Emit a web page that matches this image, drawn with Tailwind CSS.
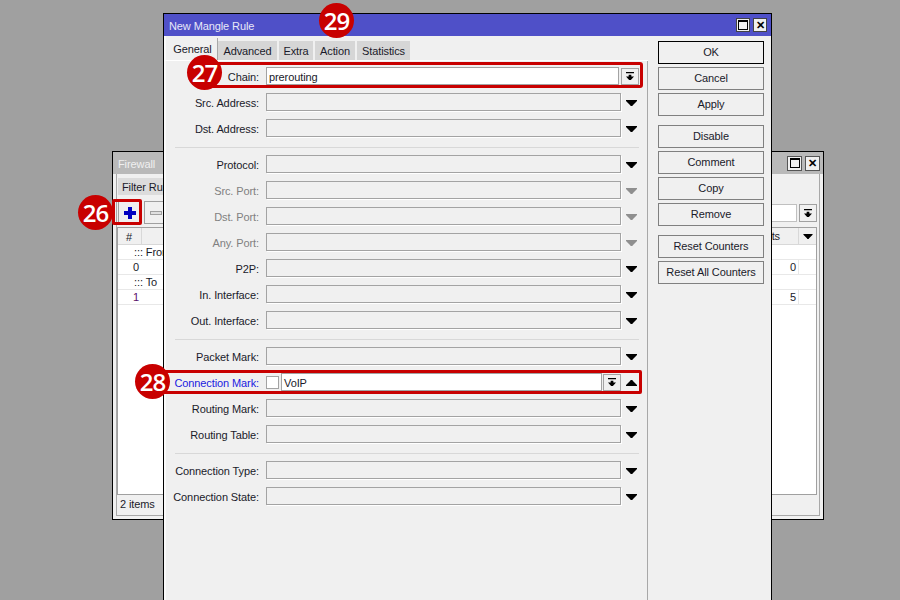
<!DOCTYPE html>
<html lang="en">
<head>
<meta charset="UTF-8">
<title>New Mangle Rule</title>
<script src="https://cdn.jsdelivr.net/npm/@tailwindcss/browser@4"></script>
</head>
<body class="bg-[#a0a0a0] overflow-hidden font-['Liberation_Sans',sans-serif] text-[11px] tracking-[-0.1px] text-[#1a1a2a]">
<svg class="hidden">
  <symbol id="down" viewBox="0 0 11 6"><path d="M0 0h11v1L6.500 5.500V6h-2v-.5L0 1z" fill="#000"/></symbol>
  <symbol id="up" viewBox="0 0 11 6"><path d="M0 6h11V5L6.500 .5V0h-2v.5L0 5z" fill="#000"/></symbol>
  <symbol id="bar" viewBox="0 0 9 9"><path d="M0 0h9v1.500H0zM3 3h3v2h3L5.500 9h-2L0 5h3z" fill="#000"/></symbol>
</svg>

<div class="relative w-[900px] h-[600px]">

  <!-- firewall window behind -->
  <div class="absolute left-[112px] top-[151px] w-[712px] h-[369px] border border-black bg-[#f0f0f0] flex flex-col">
    <div class="h-[22px] bg-[#b9b9b9] flex items-center justify-between pl-[5px] pr-[3px] text-[#f0f0f0]">
      <span class="pt-[2px]">Firewall</span>
      <div class="flex gap-[3px]">
        <div class="w-[15px] h-[15px] border border-[#555] bg-[#f0f0f0] flex items-center justify-center"><div class="w-[10px] h-[10px] border border-black border-t-2"></div></div>
        <div class="w-[15px] h-[15px] border border-[#555] bg-[#f0f0f0] flex items-center justify-center text-[11px] font-bold leading-none text-black">✕</div>
      </div>
    </div>
    <div class="flex-1 flex flex-col mx-[3px] mb-[3px] border-x border-b border-[#a8a8a8]">
      <div class="h-[17px] mt-[4px] ml-[1px] flex items-center px-[4px] pt-[2px] w-[120px] bg-[#dcdcdc]">Filter Rules</div>
      <div class="h-[23px] mt-[6px] flex items-center gap-[3px] ml-[1px] mr-[2px]">
        <div class="w-[23px] h-[23px] border border-[#a0a0a0] flex items-center justify-center">
          <svg width="12" height="12" viewBox="0 0 12 12"><path d="M4 0h4v4h4v4H8v4H4V8H0V4h4z" fill="#0000c0"/></svg>
        </div>
        <div class="w-[23px] h-[23px] border border-[#a0a0a0] flex items-center justify-center">
          <div class="w-[12px] h-[4px] border border-[#a0a0a0] bg-[#e0e0e0]"></div>
        </div>
        <div class="flex-1"></div>
        <div class="w-[30px] h-[18px] bg-white border border-[#c0c0c0] -mr-[1px]"></div>
        <div class="w-[18px] h-[18px] border border-[#a0a0a0] flex items-center justify-center"><svg width="8" height="8"><use href="#bar"/></svg></div>
      </div>
      <div class="flex-1 mt-[3px] mr-[2px] border border-[#a0a0a0] bg-white flex flex-col">
        <div class="h-[17px] flex items-center bg-[#f0f0f0] border-b border-[#d8d8d8]">
          <div class="w-[24px] pl-[8px] border-r border-[#d8d8d8] h-full leading-[18px]">#</div>
          <div class="flex-1 text-right pr-[18px] pt-[1px]">Packets</div>
          <div class="w-[18px] h-full border-l border-[#d8d8d8] flex items-center justify-center"><svg width="10" height="5"><use href="#down"/></svg></div>
        </div>
        <div class="h-[15px] pl-[16px] border-b border-[#e8e8e8] leading-[14px]">::: From</div>
        <div class="h-[15px] flex border-b border-[#e8e8e8] leading-[14px]"><div class="w-[24px] pl-[15px]">0</div><div class="flex-1 text-right pr-[2px]">0</div><div class="w-[18px] border-l border-[#e8e8e8]"></div></div>
        <div class="h-[15px] pl-[16px] border-b border-[#e8e8e8] leading-[14px]">::: To</div>
        <div class="h-[15px] flex border-b border-[#e8e8e8] leading-[14px]"><div class="w-[24px] pl-[15px] text-[#5a0f6a]">1</div><div class="flex-1 text-right pr-[2px]">5</div><div class="w-[18px] border-l border-[#e8e8e8]"></div></div>
        <div class="flex-1"></div>
      </div>
      <div class="h-[20px] pl-[3px] leading-[19px]">2 items</div>
    </div>
  </div>

  <!-- mangle rule dialog -->
  <div class="absolute left-[163px] top-[13px] w-[609px] h-[600px] border border-black bg-[#f0f0f0] flex flex-col">
    <div class="h-[22px] bg-[#4f50c8] flex items-center justify-between pl-[5px] pr-[4px] text-[#e8e8f8]">
      <span class="pt-[3px]">New Mangle Rule</span>
      <div class="flex gap-[3px]">
        <div class="w-[14px] h-[14px] border border-[#444] bg-[#f0f0f0] flex items-center justify-center"><div class="w-[10px] h-[10px] border border-black border-t-2"></div></div>
        <div class="w-[14px] h-[14px] border border-[#444] bg-[#f0f0f0] flex items-center justify-center text-[11px] font-bold leading-none text-black">✕</div>
      </div>
    </div>
    <div class="flex-1 flex shadow-[inset_2px_0_0_#fafafa]">
      <div class="w-[484px] flex flex-col">
        <!-- tabs -->
        <div class="h-[25px] flex items-end pl-[4px] gap-[2px] border-b border-white">
          <div class="w-[50px] h-[22px] border-r border-[#a8a8a8] bg-[#f0f0f0] flex items-center justify-center">General</div>
          <div class="w-[59px] h-[19px] pt-[2px] bg-[#d6d6d6] flex items-center justify-center -ml-[2px]">Advanced</div>
          <div class="w-[34px] h-[19px] pt-[2px] bg-[#d6d6d6] flex items-center justify-center">Extra</div>
          <div class="w-[40px] h-[19px] pt-[2px] bg-[#d6d6d6] flex items-center justify-center">Action</div>
          <div class="w-[53px] h-[19px] pt-[2px] bg-[#d6d6d6] flex items-center justify-center">Statistics</div>
        </div>
        <div class="flex flex-col pt-[6px] border-r border-[#a8a8a8] flex-1">

          <div class="flex flex-col gap-[8px]">
            <div class="flex items-center h-[18px]">
              <label class="w-[95px] pt-[2px] text-right">Chain:</label>
              <div class="ml-[7px] w-[353px] h-[18px] bg-white border border-[#a3a3a3] pl-[2px] leading-[18px]">prerouting</div>
              <div class="ml-[2px] w-[18px] h-[17px] border border-[#a3a3a3] flex items-center justify-center"><svg width="8" height="8"><use href="#bar"/></svg></div>
            </div>
            <div class="flex items-center h-[18px]">
              <label class="w-[95px] pt-[2px] text-right">Src. Address:</label>
              <div class="ml-[7px] w-[355px] h-[18px] border border-[#a3a3a3] shadow-[1px_1px_0_#fff]"></div>
              <svg class="ml-[5px] mt-[1px]" width="11" height="6"><use href="#down"/></svg>
            </div>
            <div class="flex items-center h-[18px]">
              <label class="w-[95px] pt-[2px] text-right">Dst. Address:</label>
              <div class="ml-[7px] w-[355px] h-[18px] border border-[#a3a3a3] shadow-[1px_1px_0_#fff]"></div>
              <svg class="ml-[5px] mt-[1px]" width="11" height="6"><use href="#down"/></svg>
            </div>
          </div>

          <div class="h-px bg-[#d8d8d8] ml-[11px] mr-[8px] mt-[10px] mb-[7px]"></div>

          <div class="flex flex-col gap-[8px]">
            <div class="flex items-center h-[18px]">
              <label class="w-[95px] pt-[2px] text-right">Protocol:</label>
              <div class="ml-[7px] w-[355px] h-[18px] border border-[#a3a3a3] shadow-[1px_1px_0_#fff]"></div>
              <svg class="ml-[5px] mt-[1px]" width="11" height="6"><use href="#down"/></svg>
            </div>
            <div class="flex items-center h-[18px]">
              <label class="w-[95px] pt-[2px] text-right text-[#808080]">Src. Port:</label>
              <div class="ml-[7px] w-[355px] h-[18px] border border-[#a3a3a3] shadow-[1px_1px_0_#fff]"></div>
              <svg class="ml-[5px] mt-[1px] opacity-40" width="11" height="6"><use href="#down"/></svg>
            </div>
            <div class="flex items-center h-[18px]">
              <label class="w-[95px] pt-[2px] text-right text-[#808080]">Dst. Port:</label>
              <div class="ml-[7px] w-[355px] h-[18px] border border-[#a3a3a3] shadow-[1px_1px_0_#fff]"></div>
              <svg class="ml-[5px] mt-[1px] opacity-40" width="11" height="6"><use href="#down"/></svg>
            </div>
            <div class="flex items-center h-[18px]">
              <label class="w-[95px] pt-[2px] text-right text-[#808080]">Any. Port:</label>
              <div class="ml-[7px] w-[355px] h-[18px] border border-[#a3a3a3] shadow-[1px_1px_0_#fff]"></div>
              <svg class="ml-[5px] mt-[1px] opacity-40" width="11" height="6"><use href="#down"/></svg>
            </div>
            <div class="flex items-center h-[18px]">
              <label class="w-[95px] pt-[2px] text-right">P2P:</label>
              <div class="ml-[7px] w-[355px] h-[18px] border border-[#a3a3a3] shadow-[1px_1px_0_#fff]"></div>
              <svg class="ml-[5px] mt-[1px]" width="11" height="6"><use href="#down"/></svg>
            </div>
            <div class="flex items-center h-[18px]">
              <label class="w-[95px] pt-[2px] text-right">In. Interface:</label>
              <div class="ml-[7px] w-[355px] h-[18px] border border-[#a3a3a3] shadow-[1px_1px_0_#fff]"></div>
              <svg class="ml-[5px] mt-[1px]" width="11" height="6"><use href="#down"/></svg>
            </div>
            <div class="flex items-center h-[18px]">
              <label class="w-[95px] pt-[2px] text-right">Out. Interface:</label>
              <div class="ml-[7px] w-[355px] h-[18px] border border-[#a3a3a3] shadow-[1px_1px_0_#fff]"></div>
              <svg class="ml-[5px] mt-[1px]" width="11" height="6"><use href="#down"/></svg>
            </div>
          </div>

          <div class="h-px bg-[#d8d8d8] ml-[11px] mr-[8px] mt-[10px] mb-[7px]"></div>

          <div class="flex flex-col gap-[8px]">
            <div class="flex items-center h-[18px]">
              <label class="w-[95px] pt-[2px] text-right">Packet Mark:</label>
              <div class="ml-[7px] w-[355px] h-[18px] border border-[#a3a3a3] shadow-[1px_1px_0_#fff]"></div>
              <svg class="ml-[5px] mt-[1px]" width="11" height="6"><use href="#down"/></svg>
            </div>
            <div class="flex items-center h-[18px]">
              <label class="w-[95px] pt-[2px] text-right text-[#1a1ae0] whitespace-nowrap">Connection Mark:</label>
              <div class="ml-[7px] w-[13px] h-[13px] bg-white border border-[#a3a3a3]"></div>
              <div class="ml-[2px] w-[321px] h-[18px] bg-white border border-[#a3a3a3] pl-[2px] leading-[18px]">VoIP</div>
              <div class="ml-[1px] w-[18px] h-[17px] border border-[#a3a3a3] flex items-center justify-center"><svg width="8" height="8"><use href="#bar"/></svg></div>
              <svg class="ml-[5px] mt-[1px]" width="11" height="6"><use href="#up"/></svg>
            </div>
            <div class="flex items-center h-[18px]">
              <label class="w-[95px] pt-[2px] text-right">Routing Mark:</label>
              <div class="ml-[7px] w-[355px] h-[18px] border border-[#a3a3a3] shadow-[1px_1px_0_#fff]"></div>
              <svg class="ml-[5px] mt-[1px]" width="11" height="6"><use href="#down"/></svg>
            </div>
            <div class="flex items-center h-[18px]">
              <label class="w-[95px] pt-[2px] text-right">Routing Table:</label>
              <div class="ml-[7px] w-[355px] h-[18px] border border-[#a3a3a3] shadow-[1px_1px_0_#fff]"></div>
              <svg class="ml-[5px] mt-[1px]" width="11" height="6"><use href="#down"/></svg>
            </div>
          </div>

          <div class="h-px bg-[#d8d8d8] ml-[11px] mr-[8px] mt-[10px] mb-[7px]"></div>

          <div class="flex flex-col gap-[8px]">
            <div class="flex items-center h-[18px]">
              <label class="w-[95px] pt-[2px] text-right whitespace-nowrap">Connection Type:</label>
              <div class="ml-[7px] w-[355px] h-[18px] border border-[#a3a3a3] shadow-[1px_1px_0_#fff]"></div>
              <svg class="ml-[5px] mt-[1px]" width="11" height="6"><use href="#down"/></svg>
            </div>
            <div class="flex items-center h-[18px]">
              <label class="w-[95px] pt-[2px] text-right whitespace-nowrap">Connection State:</label>
              <div class="ml-[7px] w-[355px] h-[18px] border border-[#a3a3a3] shadow-[1px_1px_0_#fff]"></div>
              <svg class="ml-[5px] mt-[1px]" width="11" height="6"><use href="#down"/></svg>
            </div>
          </div>
        </div>
      </div>

      <!-- buttons -->
      <div class="pl-[10px] pt-[5px] flex flex-col w-[123px]">
        <button class="w-[106px] h-[23px] border border-black">OK</button>
        <button class="w-[106px] h-[23px] border border-[#808080] mt-[3px]">Cancel</button>
        <button class="w-[106px] h-[23px] border border-[#808080] mt-[3px]">Apply</button>
        <button class="w-[106px] h-[23px] border border-[#808080] mt-[9px]">Disable</button>
        <button class="w-[106px] h-[23px] border border-[#808080] mt-[3px]">Comment</button>
        <button class="w-[106px] h-[23px] border border-[#808080] mt-[3px]">Copy</button>
        <button class="w-[106px] h-[23px] border border-[#808080] mt-[3px]">Remove</button>
        <button class="w-[106px] h-[23px] border border-[#808080] mt-[9px]">Reset Counters</button>
        <button class="w-[106px] h-[23px] border border-[#808080] mt-[3px]">Reset All Counters</button>
      </div>
    </div>
  </div>

  <!-- annotations -->
  <div class="absolute left-[112px] top-[199px] w-[30px] h-[26px] border-[3px] border-[#c80000] rounded-[2px]"></div>
  <div class="absolute left-[204px] top-[62px] w-[439px] h-[26px] border-[3px] border-[#c80000] rounded-[3px]"></div>
  <div class="absolute left-[150px] top-[370px] w-[492px] h-[24px] border-[3px] border-[#c80000] rounded-[2px]"></div>
  <div class="absolute left-[78px] top-[195px] w-[35px] h-[35px] rounded-full bg-[#c80000] text-white font-semibold tracking-[-1px] text-[24px] flex items-center justify-center font-['Open_Sans',sans-serif]">26</div>
  <div class="absolute left-[187px] top-[55px] w-[35px] h-[35px] rounded-full bg-[#c80000] text-white font-semibold tracking-[-1px] text-[24px] flex items-center justify-center font-['Open_Sans',sans-serif]">27</div>
  <div class="absolute left-[135px] top-[364px] w-[35px] h-[35px] rounded-full bg-[#c80000] text-white font-semibold tracking-[-1px] text-[24px] flex items-center justify-center font-['Open_Sans',sans-serif]">28</div>
  <div class="absolute left-[319px] top-[3px] w-[35px] h-[35px] rounded-full bg-[#c80000] text-white font-semibold tracking-[-1px] text-[24px] flex items-center justify-center font-['Open_Sans',sans-serif]">29</div>
</div>
</body>
</html>
